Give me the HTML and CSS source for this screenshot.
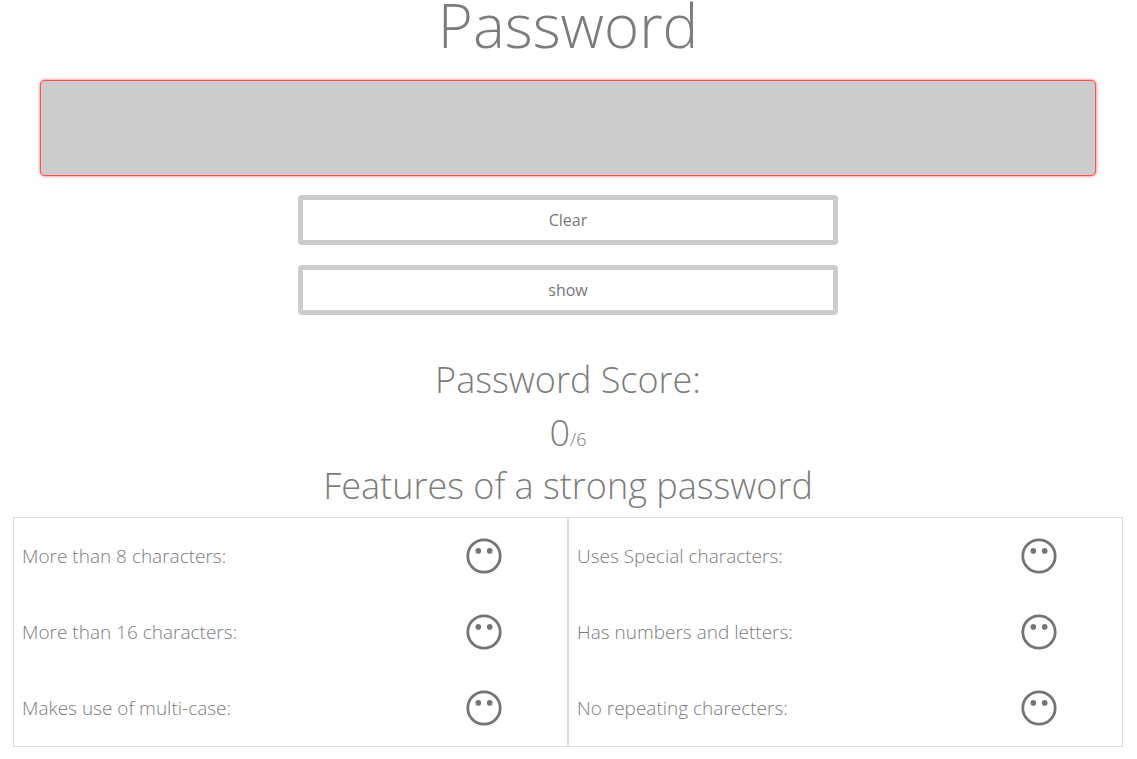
FILE: index.html
```html
<!DOCTYPE html>
<html lang="en">
<head>
<meta charset="utf-8">
<title>Password</title>
<link rel="stylesheet" href="styles.css">
</head>
<body>
<svg class="defs" aria-hidden="true">
  <symbol id="face" viewBox="0 0 36 36">
    <circle cx="18" cy="18" r="16.2" fill="none" stroke="currentColor" stroke-width="2.8"/>
    <circle cx="12.3" cy="12.9" r="2.8" fill="currentColor"/>
    <circle cx="23.7" cy="12.9" r="2.8" fill="currentColor"/>
  </symbol>
</svg>
<main class="page">
  <label class="title" for="password">Password</label>
  <input class="password" id="password" type="password">
  <div class="actions">
    <button class="action" type="button">Clear</button>
    <button class="action" type="button">show</button>
  </div>
  <h2 class="heading">Password Score:</h2>
  <p class="heading">0<span class="total">/6</span></p>
  <h2 class="heading">Features of a strong password</h2>
  <div class="features">
    <ul class="column">
      <li class="feature"><span class="name">More than 8 characters:</span><svg class="face"><use href="#face"/></svg></li>
      <li class="feature"><span class="name">More than 16 characters:</span><svg class="face"><use href="#face"/></svg></li>
      <li class="feature"><span class="name">Makes use of multi-case:</span><svg class="face"><use href="#face"/></svg></li>
    </ul>
    <ul class="column">
      <li class="feature"><span class="name">Uses Special characters:</span><svg class="face"><use href="#face"/></svg></li>
      <li class="feature"><span class="name">Has numbers and letters:</span><svg class="face"><use href="#face"/></svg></li>
      <li class="feature"><span class="name">No repeating charecters:</span><svg class="face"><use href="#face"/></svg></li>
    </ul>
  </div>
</main>
</body>
</html>
```
FILE: styles.css
```css
* { box-sizing: border-box; }
body {
  margin: 0;
  background: #fff;
  color: #7c7c7c;
  font-family: "Open Sans", sans-serif;
  font-weight: 300;
}
.defs { display: none; }
.page {
  display: flex;
  flex-direction: column;
  padding: 0 14px 12px 13px;
}
.title {
  align-self: center;
  font-size: 60px;
  line-height: 50px;
}
.password {
  height: 96px;
  margin: 30px 27px 0;
  padding: 0 16px;
  border: 1px solid #ff5050;
  border-radius: 5px;
  background: #ccc;
  box-shadow: 0 0 3px #f44;
  color: #777;
  font: inherit;
  font-size: 60px;
  text-align: center;
  outline: none;
}
.actions {
  display: flex;
  flex-direction: column;
  align-self: center;
  gap: 20px;
  width: 540px;
  max-width: 100%;
  margin: 19px 0 38px;
}
.action {
  height: 50px;
  border: 5px solid #ccc;
  border-radius: 4px;
  background: #fff;
  color: #777;
  font: inherit;
  font-size: 16px;
  font-weight: 400;
}
.heading {
  margin: 0;
  font-size: 36px;
  font-weight: 300;
  line-height: 53px;
  text-align: center;
}
.total {
  font-size: 18px;
  line-height: 20px;
}
.features {
  display: grid;
  grid-template-columns: 1fr 1fr;
  margin-top: 5px;
}
.column {
  margin: 0;
  padding: 0;
  border: 1px solid #ddd;
  list-style: none;
}
.feature {
  display: grid;
  grid-template-columns: 5fr 2fr;
  align-items: center;
  height: 76px;
  padding: 0 6px 0 8px;
}
.name { font-size: 19px; }
.face {
  justify-self: center;
  width: 36px;
  height: 36px;
  color: #727477;
}
```
